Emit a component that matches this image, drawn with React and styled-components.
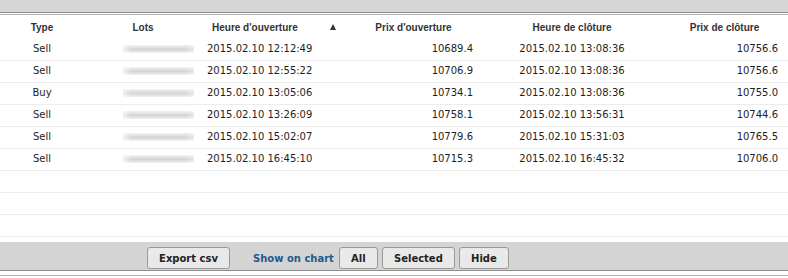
import React from "react";
import styled, {createGlobalStyle} from "styled-components";

const GlobalStyle = createGlobalStyle`
  body {
    margin: 0;
    background: #fff;
  }
`;

const COLUMNS = "84px 118px 148px 127px 190px 115px";

const Panel = styled.div`
  width: 788px;
  height: 278px;
  display: flex;
  flex-direction: column;
  background: #fff;
  font-family: "DejaVu Sans", Verdana, sans-serif;
`;

const TopBar = styled.div`
  height: 12px;
  background: #d6d6d6;
  border-bottom: 1px solid #8e8e8e;
`;

const Rule = styled.div`
  margin-top: ${props => props.$gap}px;
  border-top: 1px solid #b2b2b2;
`;

const HeaderRow = styled.div`
  display: grid;
  grid-template-columns: ${COLUMNS};
  height: 24px;
  align-items: center;
  font-family: "Liberation Sans", Arial, sans-serif;
  font-weight: bold;
  font-size: 10px;
  color: #333;
`;

const HeadCell = styled.div`
  display: flex;
  align-items: center;
  justify-content: ${props => props.$justify || "center"};
  padding-left: ${props => props.$pl || 0}px;
  gap: ${props => props.$gap || 0}px;
`;

const SortArrow = styled.span`
  width: 0;
  height: 0;
  border-left: 3px solid transparent;
  border-right: 3px solid transparent;
  border-bottom: 6px solid #333;
`;

const Row = styled.div`
  display: grid;
  grid-template-columns: ${COLUMNS};
  height: 22px;
  box-sizing: border-box;
  border-bottom: 1px solid #ececec;
  align-items: center;
  font-size: 10px;
  color: #1e1e1e;
`;

const Cell = styled.div`
  text-align: ${props => props.$align || "left"};
  padding-left: ${props => props.$pl || 0}px;
  padding-right: ${props => props.$pr || 0}px;
  white-space: nowrap;
  margin-top: -2px;
`;

// the lot sizes are blurred out in the source
const LotsBlur = styled.div`
  width: 71px;
  height: 8px;
  margin-left: 39px;
  margin-top: -1px;
  background:
    linear-gradient(to right, rgba(255,255,255,0.6), rgba(255,255,255,0) 12%, rgba(255,255,255,0) 88%, rgba(255,255,255,0.4)),
    linear-gradient(to bottom, #f2f2f2, #e2e2e2 30%, #d4d4d4 55%, #e4e4e4 80%, #f2f2f2);
  filter: blur(0.3px);
`;

const Spacer = styled.div`
  height: 5px;
`;

const Footer = styled.div`
  height: 28px;
  background: #d4d4d4;
  border-bottom: 1px solid #8e8e8e;
  display: flex;
  align-items: flex-start;
  padding-left: 147px;
`;

const Controls = styled.div`
  display: flex;
  align-items: center;
  margin-top: 5px;
`;

const Button = styled.button`
  width: ${props => props.$w}px;
  height: 22px;
  box-sizing: border-box;
  padding: 0;
  margin-left: ${props => props.$ml || 0}px;
  background: #e9e9e9;
  border: 1px solid #999;
  border-radius: 3px;
  font-family: "DejaVu Sans", Verdana, sans-serif;
  font-weight: bold;
  font-size: 10px;
  color: #222;
  text-align: center;
`;

const ChartLabel = styled.span`
  margin-left: 23px;
  font-weight: bold;
  font-size: 10px;
  color: #1f5a8b;
`;

const trades = [
  ["Sell", "2015.02.10 12:12:49", "10689.4", "2015.02.10 13:08:36", "10756.6"],
  ["Sell", "2015.02.10 12:55:22", "10706.9", "2015.02.10 13:08:36", "10756.6"],
  ["Buy", "2015.02.10 13:05:06", "10734.1", "2015.02.10 13:08:36", "10755.0"],
  ["Sell", "2015.02.10 13:26:09", "10758.1", "2015.02.10 13:56:31", "10744.6"],
  ["Sell", "2015.02.10 15:02:07", "10779.6", "2015.02.10 15:31:03", "10765.5"],
  ["Sell", "2015.02.10 16:45:10", "10715.3", "2015.02.10 16:45:32", "10706.0"],
];

export default function App() {
  return (
    <>
      <GlobalStyle />
      <Panel>
        <TopBar />
        <Rule $gap={1} />
        <HeaderRow>
          <HeadCell>Type</HeadCell>
          <HeadCell>Lots</HeadCell>
          <HeadCell $justify="flex-start" $pl={10} $gap={32}>
            Heure d'ouverture
            <SortArrow />
          </HeadCell>
          <HeadCell>Prix d'ouverture</HeadCell>
          <HeadCell>Heure de clôture</HeadCell>
          <HeadCell>Prix de clôture</HeadCell>
        </HeaderRow>
        {trades.map((t, i) => (
          <Row key={i}>
            <Cell $align="center">{t[0]}</Cell>
            <LotsBlur />
            <Cell $pl={5}>{t[1]}</Cell>
            <Cell $align="right" $pr={4}>{t[2]}</Cell>
            <Cell $align="center">{t[3]}</Cell>
            <Cell $align="right" $pr={4}>{t[4]}</Cell>
          </Row>
        ))}
        {[0, 1, 2].map(i => <Row key={"e" + i} />)}
        <Spacer />
        <Footer>
          <Controls>
            <Button $w={83}>Export csv</Button>
            <ChartLabel>Show on chart</ChartLabel>
            <Button $w={39} $ml={5}>All</Button>
            <Button $w={73} $ml={4}>Selected</Button>
            <Button $w={50} $ml={4}>Hide</Button>
          </Controls>
        </Footer>
        <Rule $gap={4} />
      </Panel>
    </>
  );
}
